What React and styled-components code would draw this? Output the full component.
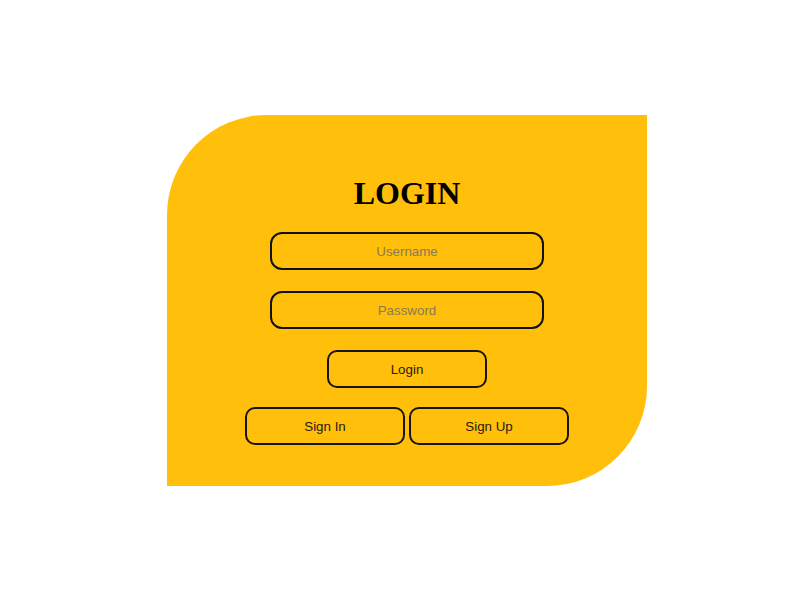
import styled, { createGlobalStyle } from "styled-components";

const Global = createGlobalStyle`
  html, body {
    margin: 0;
    padding: 0;
    background: #fff;
  }
  body {
    font-family: "Liberation Sans", Arial, sans-serif;
  }
`;

const Page = styled.div`
  width: 800px;
  height: 600px;
  display: flex;
  align-items: flex-start;
  justify-content: center;
  padding: 115px 0 0 14px;
  box-sizing: border-box;
`;

const Card = styled.form`
  width: 480px;
  height: 371px;
  box-sizing: border-box;
  background: #ffbf0a;
  border-radius: 100px 0 100px 0;
  display: flex;
  flex-direction: column;
  align-items: center;
  padding-top: 58px;
`;

const Title = styled.h1`
  margin: 0 0 19px;
  font-family: "Liberation Serif", "Times New Roman", serif;
  font-size: 32px;
  line-height: 40px;
  font-weight: 700;
  color: #000;
`;

const Input = styled.input`
  width: 274px;
  height: 38px;
  box-sizing: border-box;
  margin-bottom: 21px;
  background: transparent;
  border: 2px solid #111;
  border-radius: 12px;
  text-align: center;
  font-family: "Liberation Sans", Arial, sans-serif;
  font-size: 13.33px;
  outline: none;
  &::placeholder {
    color: #8a7a55;
  }
`;

const Button = styled.button`
  width: 160px;
  height: 38px;
  box-sizing: border-box;
  background: transparent;
  border: 2px solid #1a1410;
  border-radius: 10px;
  font-family: "Liberation Sans", Arial, sans-serif;
  font-size: 13.33px;
  color: #2a1a10;
  cursor: pointer;
`;

const Row = styled.div`
  display: flex;
  gap: 4px;
  margin-top: 19px;
`;

export default function App() {
  return (
    <>
      <Global />
      <Page>
        <Card onSubmit={(e) => e.preventDefault()}>
          <Title>LOGIN</Title>
          <Input type="text" placeholder="Username" />
          <Input type="password" placeholder="Password" />
          <Button type="submit">Login</Button>
          <Row>
            <Button type="button">Sign In</Button>
            <Button type="button">Sign Up</Button>
          </Row>
        </Card>
      </Page>
    </>
  );
}
